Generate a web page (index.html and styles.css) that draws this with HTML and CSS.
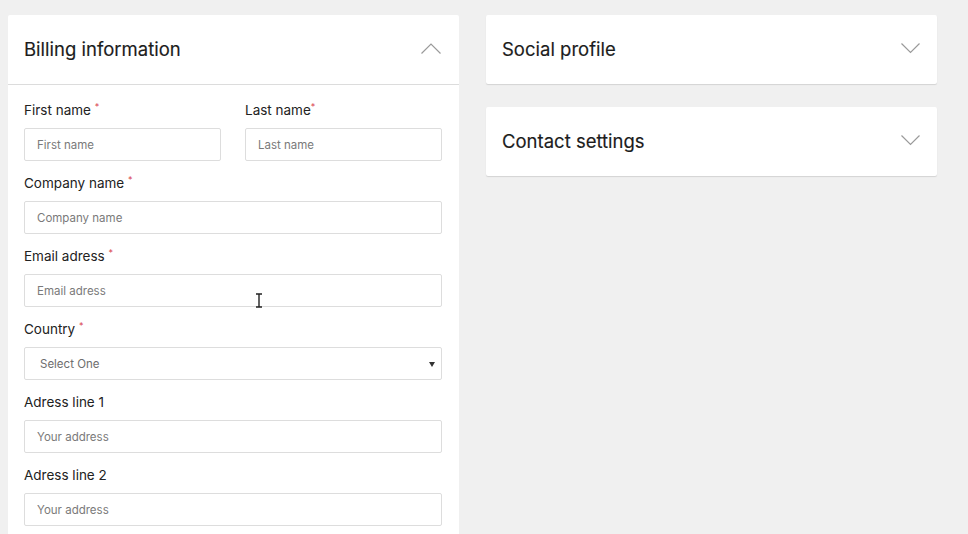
FILE: index.html
```html
<!DOCTYPE html>
<html lang="en">
<head>
<meta charset="utf-8">
<title>Billing information</title>
<link rel="stylesheet" href="styles.css">
</head>
<body>
<div class="page">
  <section class="card">
    <header class="card-head open">
      <h2>Billing information</h2>
      <svg class="chev" width="20" height="11" viewBox="0 0 20 11"><path d="M0.5 10.5 L10 1 L19.5 10.5" fill="none" stroke="#9a9a9a" stroke-width="1.2"/></svg>
    </header>
    <form class="form">
      <div class="row2">
        <div class="group">
          <label>First name <span class="req">*</span></label>
          <input type="text" placeholder="First name">
        </div>
        <div class="group">
          <label>Last name<span class="req">*</span></label>
          <input type="text" placeholder="Last name">
        </div>
      </div>
      <div class="group">
        <label>Company name <span class="req">*</span></label>
        <input type="text" placeholder="Company name">
      </div>
      <div class="group">
        <label>Email adress <span class="req">*</span></label>
        <input type="text" placeholder="Email adress">
      </div>
      <div class="group">
        <label>Country <span class="req">*</span></label>
        <div class="select">Select One<span class="caret"></span></div>
      </div>
      <div class="group">
        <label>Adress line 1</label>
        <input type="text" placeholder="Your address">
      </div>
      <div class="group">
        <label>Adress line 2</label>
        <input type="text" placeholder="Your address">
      </div>
    </form>
  </section>
  <div class="side">
    <section class="card closed">
      <header class="card-head">
        <h2>Social profile</h2>
        <svg class="chev" width="19" height="11" viewBox="0 0 19 11"><path d="M0.5 0.5 L9.5 9.5 L18.5 0.5" fill="none" stroke="#9a9a9a" stroke-width="1.2"/></svg>
      </header>
    </section>
    <section class="card closed">
      <header class="card-head">
        <h2>Contact settings</h2>
        <svg class="chev" width="19" height="11" viewBox="0 0 19 11"><path d="M0.5 0.5 L9.5 9.5 L18.5 0.5" fill="none" stroke="#9a9a9a" stroke-width="1.2"/></svg>
      </header>
    </section>
  </div>
</div>
<svg class="ibeam" width="8" height="15" viewBox="0 0 8 15"><path d="M1 1 H7 M4 1 V14 M1 14 H7" fill="none" stroke="#222" stroke-width="1.4"/></svg>
</body>
</html>
```
FILE: styles.css
```css
* { box-sizing: border-box; }
html, body { margin: 0; padding: 0; }
body {
  background: #f0f0f0;
  font-family: "Inter", "Noto Sans", sans-serif;
  color: #222;
  height: 534px;
  overflow: hidden;
  position: relative;
}
.page {
  display: grid;
  grid-template-columns: 451px 451px;
  column-gap: 27px;
  padding: 15px 0 0 8px;
  align-items: start;
}
.card {
  background: #fff;
  border-radius: 2px;
}
.card.closed {
  box-shadow: 0 1px 1px rgba(0,0,0,0.12);
}
.side {
  display: flex;
  flex-direction: column;
  gap: 23px;
}
.card-head {
  height: 69px;
  display: flex;
  align-items: center;
  justify-content: space-between;
  padding: 0 17px 0 16px;
}
.card-head.open {
  height: 70px;
  border-bottom: 1px solid #dcdcdc;
  padding-right: 18px;
}
.card-head h2 {
  margin: -2px 0 0 0;
  font-size: 18.5px;
  font-weight: 400;
  letter-spacing: 0;
  color: #1c1c1c;
  -webkit-text-stroke: 0.15px #1c1c1c;
}
.card-head .chev { display: block; margin-top: -2px; }
.form {
  padding: 15px 17px 30px 16px;
  display: flex;
  flex-direction: column;
  gap: 12px;
}
.row2 {
  display: grid;
  grid-template-columns: 1fr 1fr;
  column-gap: 24px;
}
.group {
  display: flex;
  flex-direction: column;
}
.group label {
  display: block;
  height: 20px;
  font-size: 13.5px;
  line-height: 20px;
  margin-bottom: 8px;
  color: #222;
}
.req {
  color: #d9434f;
  font-size: 9px;
  line-height: 0;
  position: relative;
  top: -5px;
}
.group input, .select {
  height: 33px;
  border: 1px solid #dddddd;
  border-radius: 2px;
  background: #fff;
  font-family: "Inter", "Noto Sans", sans-serif;
  font-size: 11.5px;
  padding: 0 12px;
  color: #333;
  outline: none;
  width: 100%;
}
.group input::placeholder { color: #7a7a7a; }
.select {
  display: flex;
  align-items: center;
  justify-content: space-between;
  padding: 0 6px 0 15px;
  color: #6e6e6e;
}
.caret {
  width: 0; height: 0;
  border-left: 3px solid transparent;
  border-right: 3px solid transparent;
  border-top: 5px solid #333;
  margin-top: 2px;
}
.ibeam {
  position: absolute;
  left: 255px;
  top: 293px;
}
```
